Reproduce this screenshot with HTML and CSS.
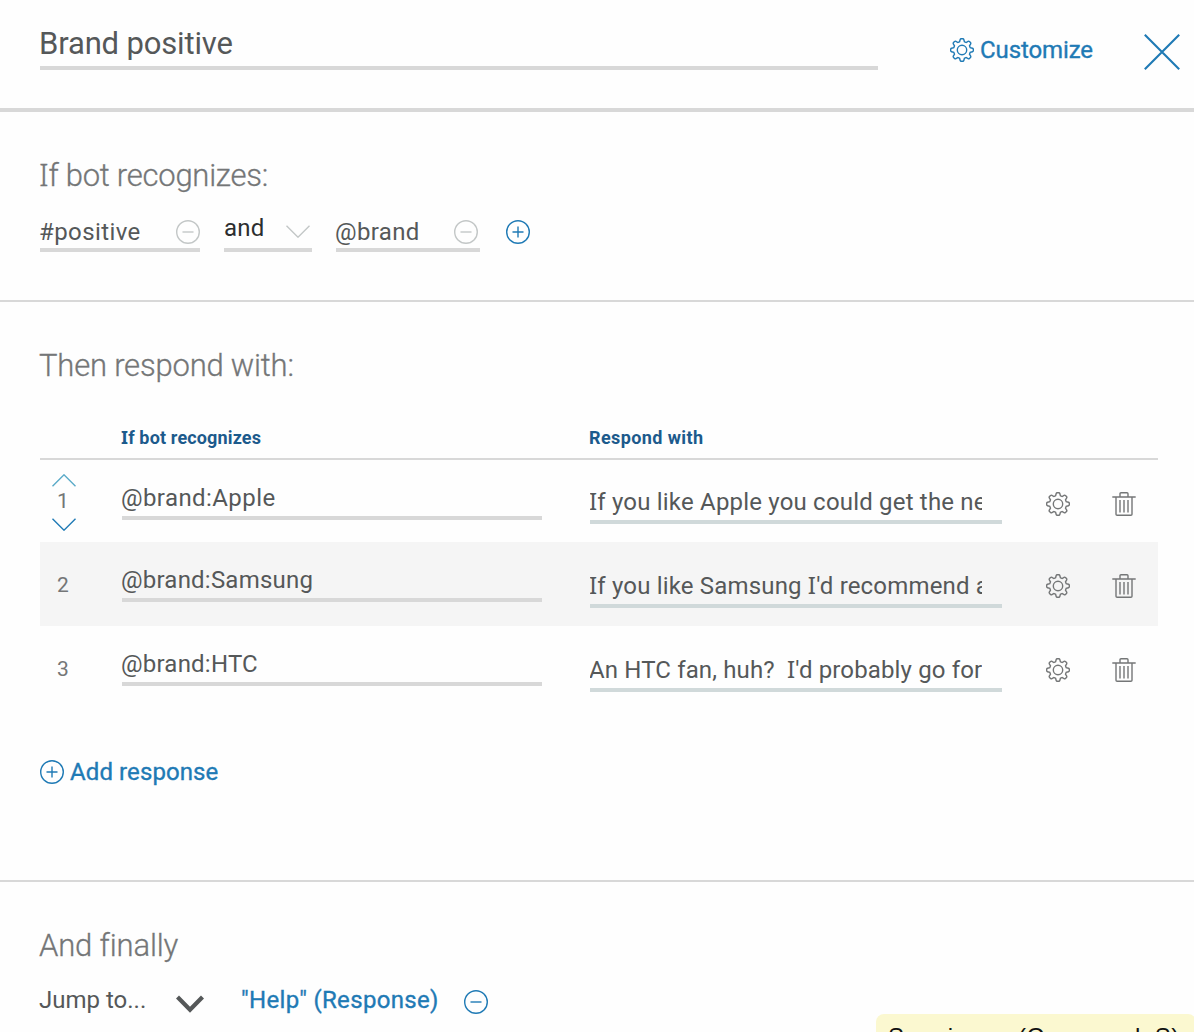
FILE: index.html
```html
<!DOCTYPE html>
<html lang="en">
<head>
<meta charset="utf-8">
<title>Brand positive</title>
<link rel="stylesheet" href="styles.css">
</head>
<body>
<svg class="sprite" aria-hidden="true">
  <symbol id="gear" viewBox="0 0 24 24">
    <circle cx="12" cy="12" r="4.7"/>
    <path d="M9.6 3.8 10.2 1.5Q10.4.7 11.2.7H12.8Q13.6.7 13.8 1.5L14.4 3.8 16.1 4.5 18.1 3.3Q18.8 2.9 19.4 3.5L20.5 4.6Q21.1 5.2 20.7 5.9L19.5 7.9 20.2 9.6 22.5 10.2Q23.3 10.4 23.3 11.2V12.8Q23.3 13.6 22.5 13.8L20.2 14.4 19.5 16.1 20.7 18.1Q21.1 18.8 20.5 19.4L19.4 20.5Q18.8 21.1 18.1 20.7L16.1 19.5 14.4 20.2 13.8 22.5Q13.6 23.3 12.8 23.3H11.2Q10.4 23.3 10.2 22.5L9.6 20.2 7.9 19.5 5.9 20.7Q5.2 21.1 4.6 20.5L3.5 19.4Q2.9 18.8 3.3 18.1L4.5 16.1 3.8 14.4 1.5 13.8Q.7 13.6.7 12.8V11.2Q.7 10.4 1.5 10.2L3.8 9.6 4.5 7.9 3.3 5.9Q2.9 5.2 3.5 4.6L4.6 3.5Q5.2 2.9 5.9 3.3L7.9 4.5Z"/>
  </symbol>
  <symbol id="trash" viewBox="0 0 24 24">
    <path d="M.3 5H23.7M4 5V22.2Q4 23.3 5.1 23.3H18.9Q20 23.3 20 22.2V5M8 5V1.7Q8 .7 9 .7H15Q16 .7 16 1.7V5M8 8V20.5M12 8V20.5M16 8V20.5"/>
  </symbol>
  <symbol id="minus" viewBox="0 0 24 24"><circle cx="12" cy="12" r="11.3"/><path d="M6.5 12H17.5"/></symbol>
  <symbol id="plus" viewBox="0 0 24 24"><circle cx="12" cy="12" r="11.3"/><path d="M6.5 12H17.5M12 6.5V17.5"/></symbol>
  <symbol id="down" viewBox="0 0 24 13"><path d="M.5.7 12 12.2 23.5.7"/></symbol>
  <symbol id="up" viewBox="0 0 24 13"><path d="M.5 12.3 12 .8 23.5 12.3"/></symbol>
</svg>

<header class="header">
  <div class="title">Brand positive</div>
  <a class="link customize"><svg class="icon"><use href="#gear"/></svg>Customize</a>
  <svg class="close" viewBox="0 0 36 36"><path d="M.8.8 35.2 35.2M35.2.8.8 35.2"/></svg>
</header>

<section class="section conditions">
  <h2 class="heading recognizes"><span class="slab">I</span>f bot recognizes:</h2>
  <div class="condition-row">
    <div class="condition intent"><span>#positive</span><svg class="icon pale"><use href="#minus"/></svg></div>
    <div class="condition operator"><span>and</span><svg class="chevron pale"><use href="#down"/></svg></div>
    <div class="condition entity"><span>@brand</span><svg class="icon pale"><use href="#minus"/></svg></div>
    <svg class="icon blue"><use href="#plus"/></svg>
  </div>
</section>

<section class="section responses">
  <h2 class="heading then">Then respond with:</h2>
  <div class="table">
    <div class="row table-head">
      <span class="head-if"><span class="slab">I</span>f bot recognizes</span>
      <span class="head-respond">Respond with</span>
    </div>
    <div class="row first">
      <div class="order"><svg class="chevron sky"><use href="#up"/></svg><span class="number">1</span><svg class="chevron blue"><use href="#down"/></svg></div>
      <div class="field match apple">@brand:Apple</div>
      <div class="field reply"><span class="clip reply-apple"><span class="slab">I</span>f you like Apple you could get the new</span></div>
      <svg class="icon gear"><use href="#gear"/></svg>
      <svg class="icon trash"><use href="#trash"/></svg>
    </div>
    <div class="row shaded">
      <div class="order"><span class="number">2</span></div>
      <div class="field match">@brand:Samsung</div>
      <div class="field reply"><span class="clip reply-samsung"><span class="slab">I</span>f you like Samsung <span class="slab">I</span>'d recommend a</span></div>
      <svg class="icon gear"><use href="#gear"/></svg>
      <svg class="icon trash"><use href="#trash"/></svg>
    </div>
    <div class="row">
      <div class="order"><span class="number">3</span></div>
      <div class="field match">@brand:HTC</div>
      <div class="field reply"><span class="clip reply-htc">An HTC fan, huh?  <span class="slab">I</span>'d probably go for</span></div>
      <svg class="icon gear"><use href="#gear"/></svg>
      <svg class="icon trash"><use href="#trash"/></svg>
    </div>
  </div>
  <a class="link add"><svg class="icon"><use href="#plus"/></svg>Add response</a>
</section>

<section class="section finally">
  <h2 class="heading">And finally</h2>
  <div class="jump-row">
    <span class="jump">Jump to...</span>
    <svg class="select-arrow" viewBox="0 0 28 18"><path d="M1.5 2 14 14.8 26.5 2"/></svg>
    <a class="target">"Help" (Response)</a>
    <svg class="icon blue"><use href="#minus"/></svg>
  </div>
</section>

<div class="tooltip">Save image <span class="shortcut">(Command–S)</span></div>
</body>
</html>
```
FILE: styles.css
```css
* { box-sizing: border-box; }

body {
  margin: 0;
  height: 1032px;
  overflow: hidden;
  position: relative;
  background: #fefefe;
  color: #555859;
  font: 24px/40px Roboto, "Liberation Sans", sans-serif;
}

.sprite { display: none; }

svg {
  display: block;
  flex: none;
  fill: none;
  stroke: currentColor;
  stroke-width: 1.4;
}

/* Capital I with serifs */
.slab { font-family: "Noto Sans", sans-serif; line-height: 0; }

.icon { width: 24px; height: 24px; }
.chevron { width: 24px; height: 13px; }
.pale { color: #c3c7c7; }
.blue { color: #1f7ab5; }
.sky { color: #5aaac8; }

.header {
  display: flex;
  height: 112px;
  padding-left: 40px;
  border-bottom: 4px solid #d8d8d8;
}

.title {
  width: 838px;
  height: 46px;
  margin-top: 24px;
  border-bottom: 4px solid #d8d8d8;
  font-size: 31px;
  letter-spacing: -0.15px;
  text-indent: -1px;
}

.link {
  display: flex;
  align-items: center;
  gap: 6px;
  height: 24px;
}

.link, .target {
  color: #1f7ab5;
  -webkit-text-stroke: 0.35px #1f7ab5;
}

.customize { width: 144px; margin: 38px 0 0 72px; letter-spacing: -0.1px; }

.close {
  width: 36px;
  height: 36px;
  margin: 34px 0 0 50px;
  color: #1f7ab5;
  stroke-width: 2.1;
}

.section { padding: 44px 36px 0 40px; border-bottom: 2px solid #d8d8d8; }
.conditions { height: 190px; }
.responses { height: 580px; }
.finally { border-bottom: 0; }

.heading {
  margin: 0 0 0 -1px;
  color: #747677;
  font-size: 31px;
  font-weight: 300;
  line-height: 40px;
  letter-spacing: -0.15px;
  -webkit-text-stroke: 0.3px #747677;
}

.recognizes { letter-spacing: -0.25px; }
.then { letter-spacing: -0.2px; }

.condition-row {
  display: flex;
  align-items: flex-start;
  gap: 24px;
  margin-top: 16px;
}

.condition {
  display: flex;
  justify-content: space-between;
  height: 40px;
  border-bottom: 4px solid #d8d8d8;
}

.condition .icon { margin-top: 8px; }
.condition-row > .icon { margin: 8px 0 0 2px; }
.intent { width: 160px; letter-spacing: 0.4px; text-indent: -1px; }
.operator { width: 88px; padding-right: 2px; color: #2c2e2f; line-height: 32px; letter-spacing: 0.2px; }
.operator .chevron { margin-top: 13px; }
.entity { width: 144px; padding-right: 2px; letter-spacing: 0.35px; text-indent: -1px; }

.table { margin-top: 36px; }

.row {
  display: grid;
  grid-template-columns: 82px 420px 412px 24px 24px;
  height: 84px;
}

.row.first { height: 82px; }
.shaded { background: #f5f5f5; }

.row.table-head {
  height: 38px;
  border-bottom: 2px solid #d8d8d8;
  color: #1c5a8c;
  font-size: 18px;
  font-weight: 700;
  line-height: 31px;
  letter-spacing: 0.15px;
}

.head-if { grid-column: 2; margin-left: -1px; }
.head-respond { grid-column: 3; margin-left: 47px; letter-spacing: 0.4px; }

.order {
  display: flex;
  flex-direction: column;
  align-items: center;
  width: 48px;
  padding-top: 23px;
  color: #747677;
  font-size: 21px;
}

.number { margin-right: 2px; }
.first .order { padding-top: 14px; line-height: 26px; }
.first .number { margin: 1px 2px 4px 0; }

.field {
  height: 42px;
  margin-top: 18px;
  border-bottom: 4px solid #d8d8d8;
}

.match { letter-spacing: 0.22px; text-indent: -1px; }
.apple { letter-spacing: 0.42px; }

.reply {
  width: 412px;
  margin: 24px 0 0 48px;
  padding-right: 20px;
  border-color: #d0d9da;
}

.first .reply { margin-top: 22px; }
.clip { display: block; overflow: hidden; height: 38px; white-space: pre; text-indent: -1px; }
.reply-apple { letter-spacing: 0.19px; }
.reply-samsung { letter-spacing: 0.17px; }
.reply-htc { letter-spacing: 0.14px; }

.gear, .trash { margin-top: 32px; color: #747677; }
.gear { margin-left: 92px; }
.trash { margin-left: 134px; }

.add { width: 182px; margin-top: 50px; letter-spacing: 0.1px; white-space: nowrap; }

.jump-row { display: flex; margin-top: 14px; }
.jump { width: 136px; text-indent: -1px; }
.select-arrow { width: 28px; height: 18px; margin-top: 15px; stroke-width: 4.2; }
.target { width: 224px; padding-left: 37px; letter-spacing: 0.33px; white-space: nowrap; }
.jump-row .icon { margin: 10px 0 0 36px; }

/* Native system tooltip floating over the lower right corner */
.tooltip {
  position: absolute;
  left: 876px;
  top: 1014px;
  width: 320px;
  height: 44px;
  padding-left: 12px;
  border-radius: 8px;
  background: #fbf8d0;
  color: #111;
  font: 24px/46px "Liberation Sans", Arial, sans-serif;
  letter-spacing: -0.3px;
  white-space: nowrap;
}

.shortcut { letter-spacing: 0.5px; }
```
